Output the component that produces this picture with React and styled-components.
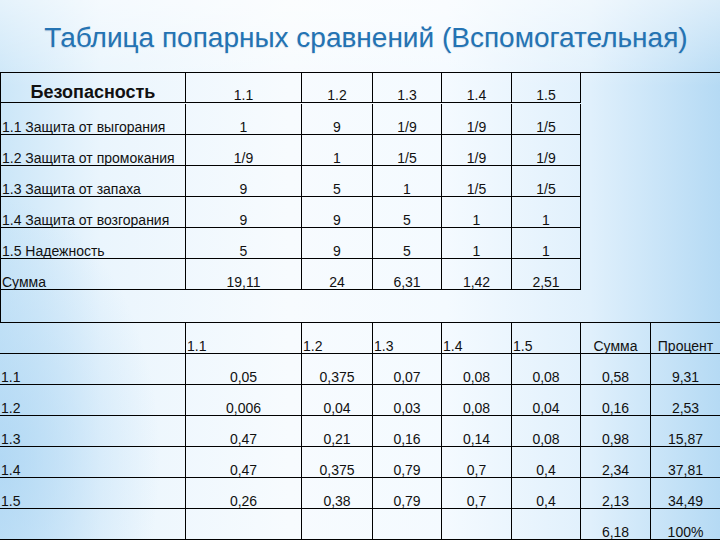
import React from 'react';
import styled, { createGlobalStyle } from 'styled-components';

const GlobalStyle = createGlobalStyle`
  html, body {
    margin: 0;
    padding: 0;
  }
  body {
    font-family: "Liberation Sans", Arial, sans-serif;
    color: #000;
  }
`;

const Page = styled.div`
  width: 720px;
  height: 540px;
  overflow: hidden;
  box-sizing: border-box;
  background:
    linear-gradient(180deg, rgba(255, 255, 255, 0.5) 0%, rgba(255, 255, 255, 0) 16%),
    radial-gradient(ellipse 160px 260px at 0% 85%, rgba(170, 212, 243, 0.75), rgba(170, 212, 243, 0) 100%),
    linear-gradient(90deg, #cbe6f8 0%, #eaf5fd 14%, #f7fbfe 40%, #f4faff 62%, #e0f0fc 82%, #b5daf4 100%);
`;

const Title = styled.h1`
  margin: 0;
  height: 72px;
  box-sizing: border-box;
  padding: 22px 0 0 12px;
  text-align: center;
  font-family: "Liberation Sans", Arial, sans-serif;
  font-weight: normal;
  font-size: 28px;
  letter-spacing: 0;
  color: #2473b3;
  text-shadow: 0 1px 1px rgba(20, 60, 110, 0.15);
`;

const Frame = styled.div`
  border-top: 1px solid #000;
  border-left: 1px solid #000;
  width: 720px;
  box-sizing: border-box;
`;

const Grid = styled.div`
  display: grid;
  grid-template-columns: ${(p) => p.$cols};
  grid-auto-rows: 31px;
  width: ${(p) => p.$width}px;
  ${(p) => (p.$top ? 'border-top: 1px solid #000;' : '')}
`;

const Cell = styled.div`
  box-sizing: border-box;
  display: flex;
  align-items: flex-end;
  justify-content: ${(p) => (p.$align === 'left' ? 'flex-start' : 'center')};
  padding: 0 0 ${(p) => (p.$bold ? '1px' : '0')} ${(p) => (p.$align === 'left' ? '1px' : '0')};
  height: ${(p) => (p.$h ? `${p.$h}px` : '31px')};
  border-right: ${(p) => (p.$noRight ? 'none' : '1px solid #000')};
  border-bottom: 1px solid #000;
  font-size: ${(p) => (p.$bold ? '18px' : '14px')};
  font-weight: ${(p) => (p.$bold ? 'bold' : 'normal')};
  color: #111;
  white-space: nowrap;
  line-height: 1;
`;

const Spacer = styled.div`
  height: 32px;
`;

const topHead = ['1.1', '1.2', '1.3', '1.4', '1.5'];

const topRows = [
  ['1.1 Защита от выгорания', '1', '9', '1/9', '1/9', '1/5'],
  ['1.2 Защита от промокания', '1/9', '1', '1/5', '1/9', '1/9'],
  ['1.3 Защита от запаха', '9', '5', '1', '1/5', '1/5'],
  ['1.4 Защита от возгорания', '9', '9', '5', '1', '1'],
  ['1.5 Надежность', '5', '9', '5', '1', '1'],
  ['Сумма', '19,11', '24', '6,31', '1,42', '2,51'],
];

const bottomHead = ['1.1', '1.2', '1.3', '1.4', '1.5'];

const bottomRows = [
  ['1.1', '0,05', '0,375', '0,07', '0,08', '0,08', '0,58', '9,31'],
  ['1.2', '0,006', '0,04', '0,03', '0,08', '0,04', '0,16', '2,53'],
  ['1.3', '0,47', '0,21', '0,16', '0,14', '0,08', '0,98', '15,87'],
  ['1.4', '0,47', '0,375', '0,79', '0,7', '0,4', '2,34', '37,81'],
  ['1.5', '0,26', '0,38', '0,79', '0,7', '0,4', '2,13', '34,49'],
  ['', '', '', '', '', '', '6,18', '100%'],
];

const topCols = '185px 116px 71px 69px 70px 69px';
const bottomCols = '186px 116px 71px 69px 70px 69px 70px 69px';

export default function App() {
  return (
    <Page>
      <GlobalStyle />
      <Title>Таблица попарных сравнений (Вспомогательная)</Title>
      <Frame>
        <Grid $cols={topCols} $width={580}>
          <Cell $bold $h={30}>
            Безопасность
          </Cell>
          {topHead.map((h) => (
            <Cell key={h} $h={30}>
              {h}
            </Cell>
          ))}
          {topRows.map((row) =>
            row.map((v, i) => (
              <Cell key={row[0] + i} $align={i === 0 ? 'left' : 'center'}>
                {v}
              </Cell>
            ))
          )}
        </Grid>
        <Spacer />
      </Frame>
      <Grid $cols={bottomCols} $width={720} $top>
        <Cell />
        {bottomHead.map((h) => (
          <Cell key={h} $align="left">
            {h}
          </Cell>
        ))}
        <Cell>Сумма</Cell>
        <Cell $noRight>Процент</Cell>
        {bottomRows.map((row, r) =>
          row.map((v, i) => (
            <Cell
              key={`${r}-${i}`}
              $align={i === 0 ? 'left' : 'center'}
              $noRight={i === 7}
            >
              {v}
            </Cell>
          ))
        )}
      </Grid>
    </Page>
  );
}
